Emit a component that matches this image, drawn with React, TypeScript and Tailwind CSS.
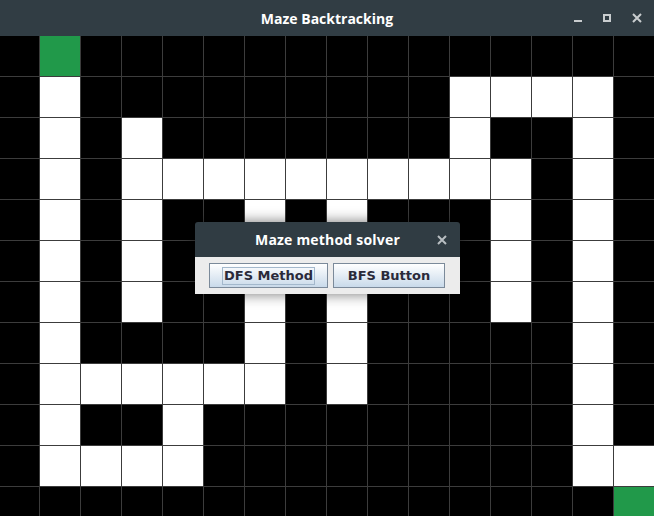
import React from "react";

// 0 = wall, 1 = open path, 2 = start / goal
const MAZE: number[][] = [
  [0, 2, 0, 0, 0, 0, 0, 0, 0, 0, 0, 0, 0, 0, 0, 0],
  [0, 1, 0, 0, 0, 0, 0, 0, 0, 0, 0, 1, 1, 1, 1, 0],
  [0, 1, 0, 1, 0, 0, 0, 0, 0, 0, 0, 1, 0, 0, 1, 0],
  [0, 1, 0, 1, 1, 1, 1, 1, 1, 1, 1, 1, 1, 0, 1, 0],
  [0, 1, 0, 1, 0, 0, 1, 0, 1, 0, 0, 0, 1, 0, 1, 0],
  [0, 1, 0, 1, 0, 0, 1, 0, 1, 0, 0, 0, 1, 0, 1, 0],
  [0, 1, 0, 1, 0, 0, 1, 0, 1, 0, 0, 0, 1, 0, 1, 0],
  [0, 1, 0, 0, 0, 0, 1, 0, 1, 0, 0, 0, 0, 0, 1, 0],
  [0, 1, 1, 1, 1, 1, 1, 0, 1, 0, 0, 0, 0, 0, 1, 0],
  [0, 1, 0, 0, 1, 0, 0, 0, 0, 0, 0, 0, 0, 0, 1, 0],
  [0, 1, 1, 1, 1, 0, 0, 0, 0, 0, 0, 0, 0, 0, 1, 1],
  [0, 0, 0, 0, 0, 0, 0, 0, 0, 0, 0, 0, 0, 0, 0, 2],
];

const cellColor = ["bg-black", "bg-white", "bg-[#21994a]"];

function WindowControls() {
  return (
    <div className="flex items-center justify-end gap-[21px] pr-[12px] text-[#c9cdcf]">
      <div className="w-[8px] h-[2px] bg-current mt-[6px]" />
      <div className="w-[8px] h-[8px] border-2 border-current" />
      <svg width="10" height="10" viewBox="0 0 10 10">
        <path d="M1 1 L9 9 M9 1 L1 9" stroke="currentColor" strokeWidth="2" />
      </svg>
    </div>
  );
}

function SolverDialog() {
  return (
    <div className="absolute left-[195px] top-[222px] w-[265px] rounded-t-[3px] overflow-hidden shadow-[0_0_14px_rgba(0,0,0,0.55)]">
      <div className="relative h-[35px] bg-[#303c43] flex items-center justify-center">
        <span className="text-white font-bold text-[14px] font-['Open_Sans',sans-serif] tracking-[0.2px]">
          Maze method solver
        </span>
        <svg className="absolute right-[13px] top-[13px]" width="10" height="10" viewBox="0 0 10 10">
          <path d="M1 1 L9 9 M9 1 L1 9" stroke="#b8bec2" strokeWidth="2" />
        </svg>
      </div>
      <div className="bg-[#ececec] flex gap-[5px] pl-[14px] pr-[15px] py-[6px]">
        <button className="w-[119px] h-[25px] border border-[#7b8a9a] bg-gradient-to-b from-white to-[#c9daea] flex items-center justify-center">
          <span className="border border-[#a3b8cc] px-[1px] leading-[16px] text-[13px] font-bold text-[#2a2a3a] font-['DejaVu_Sans',sans-serif]">
            DFS Method
          </span>
        </button>
        <button className="w-[112px] h-[25px] border border-[#7b8a9a] bg-gradient-to-b from-white to-[#c9daea] flex items-center justify-center text-[13px] font-bold text-[#2a2a3a] font-['DejaVu_Sans',sans-serif]">
          BFS Button
        </button>
      </div>
    </div>
  );
}

export default function App() {
  return (
    <div className="relative w-[654px] h-[516px] overflow-hidden bg-black">
      <div className="h-[36px] bg-[#313d44] grid grid-cols-[1fr_auto_1fr] items-center">
        <div />
        <span className="text-white font-bold text-[14px] font-['Open_Sans',sans-serif]">
          Maze Backtracking
        </span>
        <WindowControls />
      </div>

      <div className="-ml-px grid grid-cols-[repeat(16,40px)] auto-rows-[40px] gap-px bg-[#3c3c3c] w-[655px]">
        {MAZE.flatMap((row, r) =>
          row.map((v, c) => <div key={`${r}-${c}`} className={cellColor[v]} />)
        )}
      </div>

      <SolverDialog />
    </div>
  );
}
